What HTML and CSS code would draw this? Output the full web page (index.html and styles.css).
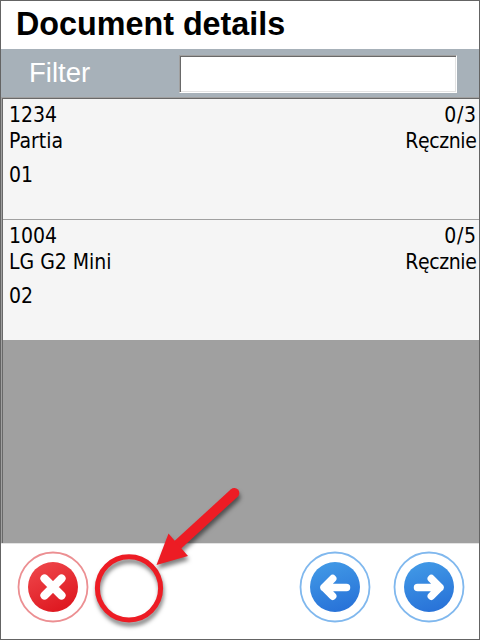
FILE: index.html
```html
<!DOCTYPE html>
<html lang="en">
<head>
<meta charset="utf-8">
<title>Document details</title>
<link rel="stylesheet" href="styles.css">
</head>
<body>
<main class="window">
  <h1 class="title">Document details</h1>
  <label class="filter"><span class="filter-label">Filter</span><input class="filter-input" type="text"></label>
  <section class="list">
    <article class="row">
      <div class="line"><span>1234</span><span class="count">0/3</span></div>
      <div class="line"><span>Partia</span><span class="mode">Ręcznie</span></div>
      <div class="line position"><span>01</span></div>
    </article>
    <article class="row">
      <div class="line"><span>1004</span><span class="count">0/5</span></div>
      <div class="line"><span>LG G2 Mini</span><span class="mode">Ręcznie</span></div>
      <div class="line position"><span>02</span></div>
    </article>
  </section>
  <footer class="toolbar">
    <svg class="icon" viewBox="-36 -36 72 72">
      <defs><linearGradient id="red" x1="0" y1="0" x2=".5" y2="1"><stop offset="0" stop-color="#f04a4e"/><stop offset="1" stop-color="#df1a22"/></linearGradient></defs>
      <circle r="34.5" fill="#fff" stroke="#ec8f92" stroke-width="1.8"/>
      <circle r="25" fill="url(#red)"/>
      <path d="M-8.5-8.5 8.5 8.5M8.5-8.5-8.5 8.5" stroke="#fff" stroke-width="8.2" stroke-linecap="round"/>
    </svg>
    <svg class="icon back" viewBox="-36 -36 72 72">
      <defs><linearGradient id="blue" x1=".3" y1="0" x2=".6" y2="1"><stop offset="0" stop-color="#4199e6"/><stop offset="1" stop-color="#2872d8"/></linearGradient></defs>
      <circle r="34.5" fill="#fff" stroke="#80b8ee" stroke-width="1.8"/>
      <circle r="25" fill="url(#blue)"/>
      <path d="M11.5.4H-11M-2.3-8.4-11 .4-2.3 9.2" fill="none" stroke="#fff" stroke-width="7.5" stroke-linecap="round" stroke-linejoin="round"/>
    </svg>
    <svg class="icon" viewBox="-36 -36 72 72">
      <circle r="34.5" fill="#fff" stroke="#80b8ee" stroke-width="1.8"/>
      <circle r="25" fill="url(#blue)"/>
      <path d="M-11.5.4H11M2.3-8.4 11 .4 2.3 9.2" fill="none" stroke="#fff" stroke-width="7.5" stroke-linecap="round" stroke-linejoin="round"/>
    </svg>
  </footer>
  <svg class="callout" viewBox="85 480 165 160">
    <circle class="mark" cx="129" cy="588.3" r="31.6" fill="none" stroke="#ed1c24" stroke-width="5"/>
    <g class="mark" fill="#ed1c24">
      <path d="M234.3 493 177 545.5" stroke="#ed1c24" stroke-width="10" stroke-linecap="round"/>
      <path d="M156.5 565 168.5 533.5 188 556Z"/>
    </g>
  </svg>
</main>
</body>
</html>
```
FILE: styles.css
```css
* { box-sizing: border-box; }
body { margin: 0; background: #fff; }
.window {
  position: relative;
  display: flex;
  flex-direction: column;
  width: 480px;
  height: 640px;
  border: 1px solid #646464;
  overflow: hidden;
  color: #000;
}
.title {
  flex: none;
  height: 48px;
  margin: 0;
  padding-left: 15px;
  font: bold 32.3px/46px "Liberation Sans", sans-serif;
}
.filter {
  flex: none;
  display: flex;
  align-items: center;
  height: 48px;
  background: #a7b1b9;
}
.filter-label {
  width: 178px;
  padding-left: 28px;
  color: #fff;
  font: 27.5px/46px "Liberation Sans", sans-serif;
}
.filter-input {
  width: 278px;
  height: 38px;
  margin-top: 2px;
  border: 1px solid;
  border-color: #a0a0a0 #fff #fff #a0a0a0;
  box-shadow: inset 1px 1px #696969, inset -1px -1px #e3e3e3;
  background: #fff;
  outline: 0;
}
.list {
  flex: none;
  height: 447px;
  padding: 2px 0 0 2px;
  background: #a0a0a0;
  border-bottom: 1px solid #e3e3e3;
  box-shadow: inset 1px 1px #a0a0a0, inset 2px 2px #696969;
}
.row {
  height: 121px;
  padding: 3px 3px 0 6px;
  background: #f5f5f5;
  border-bottom: 1px solid #a0a0a0;
}
.line {
  display: flex;
  justify-content: space-between;
  height: 26px;
  font: 21px/26px "DejaVu Sans Condensed", "DejaVu Sans", sans-serif;
  white-space: pre;
}
.count { letter-spacing: .7px; margin-right: -.7px; }
.mode { letter-spacing: -.4px; margin-right: -.4px; }
.position { margin-top: 8px; }
.toolbar {
  flex: 1;
  display: flex;
  align-items: flex-start;
  gap: 22px;
  padding: 7px 14px 0 16px;
}
.icon { flex: none; width: 72px; height: 72px; }
.back { margin-left: auto; }
.callout {
  position: absolute;
  left: 84px;
  top: 479px;
  width: 165px;
  height: 160px;
  pointer-events: none;
}
.mark { filter: drop-shadow(1px 4px 2px rgba(0, 0, 0, .5)); }
```
